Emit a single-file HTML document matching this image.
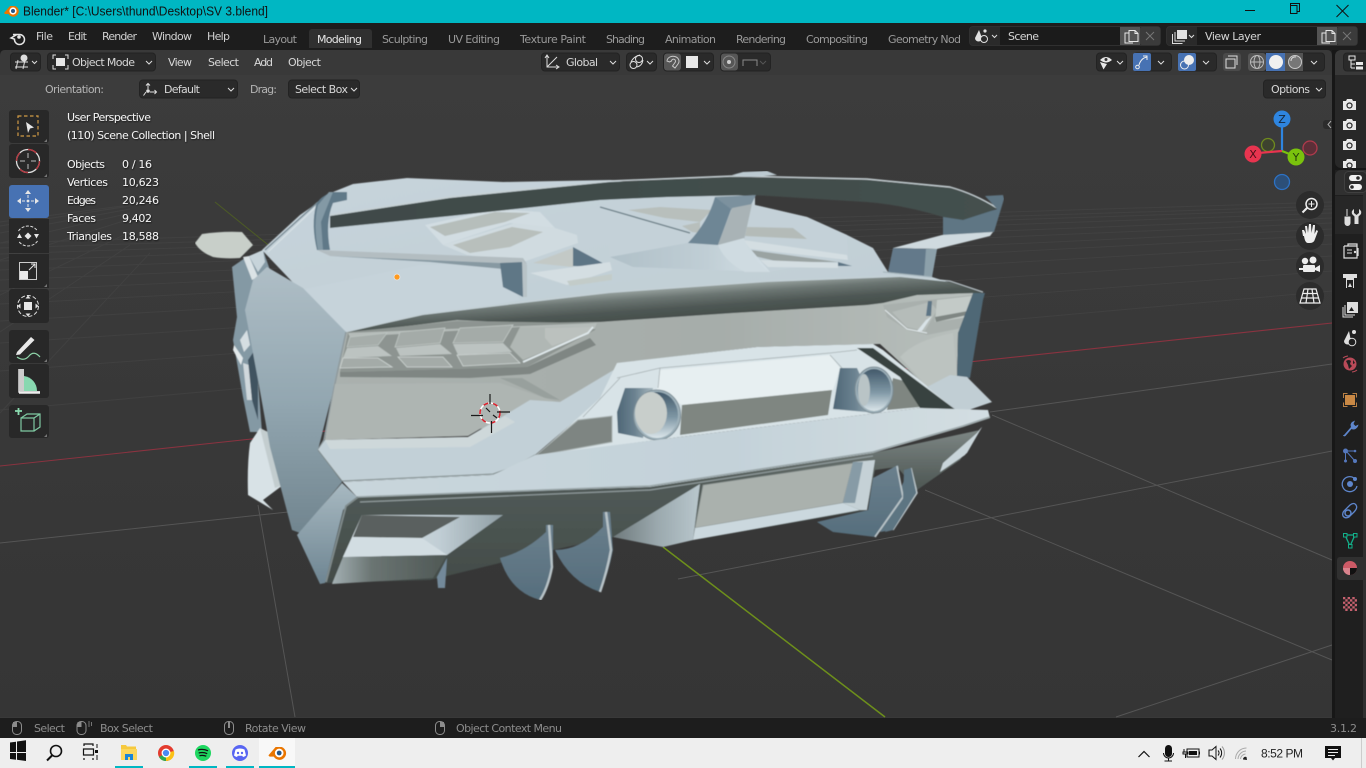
<!DOCTYPE html>
<html><head><meta charset="utf-8"><title>Blender</title>
<style>
html,body{margin:0;padding:0;width:1366px;height:768px;overflow:hidden;background:#393939}
svg{display:block}
text{font-family:"DejaVu Sans","Liberation Sans",sans-serif;font-size:11px;white-space:pre}
.m{fill:#d0d0d0}.tb{fill:#9a9a9a}.w{fill:#d8d8d8}.s{fill:#8c8c8c}
.i{fill:#f2f2f2;filter:url(#ds)}
.b{fill:#2a2a2a;stroke:#232323}
.ic{fill:none;stroke:#dcdcdc;stroke-width:1.2}
</style></head><body>
<svg width="1366" height="768" viewBox="0 0 1366 768" xmlns="http://www.w3.org/2000/svg">
<defs>
<filter id="ds" x="-5%" y="-30%" width="110%" height="160%"><feDropShadow dx="0.6" dy="0.8" stdDeviation="0.7" flood-color="#000" flood-opacity=".8"/></filter>
<filter id="soft" x="0" y="0" width="100%" height="100%"><feGaussianBlur stdDeviation="0.55"/></filter>
<linearGradient id="bg" x1="0" y1="0" x2="0" y2="1"><stop offset="0" stop-color="#3c3c3c"/><stop offset="1" stop-color="#353535"/></linearGradient>
<linearGradient id="deck" x1="0" y1="0" x2="1" y2="1"><stop offset="0" stop-color="#c7d4db"/><stop offset="1" stop-color="#bfcdd4"/></linearGradient>
<linearGradient id="lip" gradientUnits="userSpaceOnUse" x1="600" y1="293" x2="602" y2="322"><stop offset="0" stop-color="#97a19e"/><stop offset=".3" stop-color="#6c7673"/><stop offset=".7" stop-color="#4e5754"/><stop offset="1" stop-color="#464f4c"/></linearGradient>
<linearGradient id="rear" x1="0" y1="0" x2="1" y2="0"><stop offset="0" stop-color="#aab1ae"/><stop offset=".6" stop-color="#a6adaa"/><stop offset="1" stop-color="#b9c0bd"/></linearGradient>
<linearGradient id="side" x1="0" y1="0" x2="0" y2="1"><stop offset="0" stop-color="#afbec6"/><stop offset=".5" stop-color="#93a7b1"/><stop offset="1" stop-color="#71858f"/></linearGradient>
<linearGradient id="corner" x1="0" y1="0" x2="0" y2="1"><stop offset="0" stop-color="#a8b9c1"/><stop offset="1" stop-color="#6e8592"/></linearGradient>
<linearGradient id="und" x1="0" y1="0" x2="0" y2="1"><stop offset="0" stop-color="#7d8684"/><stop offset=".35" stop-color="#515a57"/><stop offset="1" stop-color="#434c49"/></linearGradient>
<linearGradient id="fin" x1="0" y1="0" x2="0" y2="1"><stop offset="0" stop-color="#6b808d"/><stop offset="1" stop-color="#566e7d"/></linearGradient>
<linearGradient id="bar" x1="0" y1="0" x2="1" y2="0"><stop offset="0" stop-color="#4e6676"/><stop offset=".5" stop-color="#6c8391"/><stop offset="1" stop-color="#a9b9c0"/></linearGradient>
<linearGradient id="inn" x1="0" y1="0" x2="0" y2="1"><stop offset="0" stop-color="#42596a"/><stop offset=".55" stop-color="#7f97a5"/><stop offset="1" stop-color="#dbe6ea"/></linearGradient>
<linearGradient id="bump" x1="0" y1="0" x2="1" y2="0"><stop offset="0" stop-color="#c9d6dc"/><stop offset=".6" stop-color="#c4d2d9"/><stop offset="1" stop-color="#d3dee2"/></linearGradient>
<linearGradient id="base" x1="0" y1="0" x2="1" y2="0"><stop offset="0" stop-color="#b0c0c8"/><stop offset=".6" stop-color="#c0ced5"/><stop offset="1" stop-color="#d4e0e6"/></linearGradient>
<linearGradient id="plateL" x1="0" y1="0" x2="1" y2="0"><stop offset="0" stop-color="#6f7a7c"/><stop offset=".5" stop-color="#9aa8ad"/><stop offset="1" stop-color="#b9c7cd"/></linearGradient>
<linearGradient id="wingE" x1="0" y1="0" x2="1" y2="0"><stop offset="0" stop-color="#3f4a48"/><stop offset="1" stop-color="#44504e"/></linearGradient>
<linearGradient id="inlet" x1="0" y1="0" x2="1" y2="0"><stop offset="0" stop-color="#dbe5ea"/><stop offset=".6" stop-color="#c1ced5"/><stop offset="1" stop-color="#8f9ea4"/></linearGradient>
<linearGradient id="lowb" x1="0" y1="0" x2="1" y2="0"><stop offset="0" stop-color="#a4b1b4"/><stop offset=".35" stop-color="#6a7472"/><stop offset="1" stop-color="#4f5855"/></linearGradient>
</defs>

<!-- viewport -->
<rect x="0" y="50" width="1332" height="667" fill="url(#bg)"/>
<g stroke="#474747" stroke-width="1" fill="none" opacity=".55">
<path d="M0 243L1332 202M0 248L1332 206M0 254L1332 209M0 261L1332 213M0 270L1332 218M0 280L1332 223M0 291L1332 229M0 304L1332 235M0 321L1332 244M0 343L1332 256M0 371L1332 271M0 410L1332 291"/>
<path d="M0 222L130 205M0 226L130 206M0 233L130 209M0 243L130 213M0 260L130 219M0 295L130 232M0 332L130 245M0 413L150 253"/>
</g>
<g stroke="#555" stroke-width="1" fill="none">
<path d="M0 543L288 512M990 412L1332 364M678 579L1332 451M1116 717L1332 645"/>
<path d="M258 505L295 717M925 490L1332 660M992 415L1332 560"/>
</g>
<g stroke-width="1.1" fill="none">
<path d="M0 466L1332 323" stroke="#8a3340"/>
<path d="M215 202L272 248" stroke="#4c5a26"/>
<path d="M663 547L885 717" stroke="#6d8f1b" stroke-width="1.5"/>
</g>

<!-- ===== CAR ===== -->
<g filter="url(#soft)">
<!-- fins behind right side -->
<polygon points="940,472 982,427 967,453 945,470" fill="#c9d5da"/>
<polygon points="910,468 917,493 893,530 880,532 895,500" fill="#5d7482"/>
<!-- mirror -->
<path d="M195 243L202 234Q222 231 242 232L253 245L240 258Q225 259 213 257Q200 252 195 243Z" fill="#c8cfc9"/>
<!-- left strip -->
<polygon points="232,267 245,258 263,250 270,270 258,380 262,432 250,432 243,397 233,340 237,317" fill="#8499a4"/>
<polygon points="243,257 249,256 258,277 252,280" fill="#dbe3e6"/>
<polygon points="249,256 263,250 265,262 258,272" fill="#c7d4da"/>
<polygon points="243,363 249,365 252,400 247,400" fill="#d0d8dc"/>
<polygon points="234,345 243,358 241,365 233,350" fill="#e3e9eb"/>
<polygon points="240,340 247,330 250,345 244,352" fill="#d5dee2"/>
<polygon points="248,360 258,345 258,420 252,400" fill="#3f5260"/>
<path d="M250 443L260 428L283 485L263 500L273 510L248 495Q247 465 250 443Z" fill="#d8e2e6"/>
<polygon points="260,428 268,432 283,485 275,488" fill="#c3cdcf"/>
<!-- deck body -->
<polygon points="262,250 300,215 333,192 353,184 407,178 503,182 610,180 755,197 755,205 807,217 847,235 873,248 888,272 932,277 983,293 600,300 346,332 300,290" fill="url(#deck)"/>
<path d="M265 250L317 203L333 193" stroke="#7a8b94" stroke-width="1.5" fill="none"/>
<path d="M268 252L320 203" stroke="#dbe4e8" stroke-width="1" fill="none"/>
<polygon points="300,290 420,265 500,263 520,300 346,332" fill="#c6d3da"/>
<!-- left vents -->
<polygon points="425,225 495,209 540,212 555,228 510,223 443,245" fill="#d2dde2"/>
<polygon points="430,227 495,212 530,213 505,222 445,236" fill="#b6bebb"/>
<polygon points="443,245 515,223 555,228 577,235 578,243 523,262 467,255" fill="#d0dbe0"/>
<polygon points="453,245 512,227 543,232 510,247 470,253" fill="#b8bfbc"/>
<polygon points="533,263 573,248 573,267" fill="#c3c9c6"/>
<polygon points="573,247 610,267 573,266" fill="#5d7585"/>
<polygon points="530,273 610,262 612,270 567,285" fill="#d4dee2"/>
<polygon points="567,281 612,274 612,280 570,286" fill="#c3ccc9"/>
<!-- right vents and deck -->
<polygon points="610,202 700,198 755,205 807,217 847,235 848,258 770,272 633,267 610,257" fill="#c4d1d8"/>
<polygon points="628,210 660,207 712,210 700,222 665,218" fill="#b8bfbc"/>
<path d="M600 207L690 233" stroke="#6b7e86" stroke-width="1.3"/>
<polygon points="682,226 700,222 700,233 692,232" fill="#b8bfbc"/>
<polygon points="747,227 793,228 807,239 745,236" fill="#b4bbb8"/>
<polygon points="743,240 847,255 848,260 743,248" fill="#d4dee2"/>
<polygon points="743,249 838,262 780,262 750,255" fill="#9aa3a2"/>
<polygon points="760,260 838,263 838,268 768,267" fill="#d4dee2"/>
<polygon points="838,262 852,266 838,266" fill="#5d7585"/>
<!-- central pylon -->
<polygon points="687,243 610,257 633,267 770,272 743,240" fill="url(#base)"/>
<path d="M715 197L732 207L718 245L688 243Q708 222 715 197Z" fill="#6e8695"/>
<polygon points="715,197 756,195 750,207 732,210" fill="#7b919e"/>
<polygon points="732,208 752,204 744,240 718,245" fill="#a9b3b6"/>
<path d="M718 245L744 238Q750 258 770 272L745 272Q725 262 718 245Z" fill="#cfdbe1"/>
<!-- wing -->
<path d="M330 216L450 198L610 182L733 177L867 180L950 188Q975 195 997 208Q980 217 963 220Q950 220 943 217Q905 205 867 202L753 195L667 197L600 200L450 216L330 228Z" fill="url(#wingE)"/>
<path d="M330 215L450 197L610 181L733 176L867 179L950 187Q975 194 997 208" stroke="#c7d2d6" stroke-width="1.4" fill="none"/>
<polygon points="732,175 743,172 767,171 777,175 750,177" fill="#bccad1"/>
<!-- wing right end plate -->
<polygon points="985,196 1003,195 1004,199 994,232 943,236 943,217 963,220 997,209" fill="#5e7684"/>
<polygon points="942,235 993,232 990,236 937,249 893,248" fill="#cfdadf"/>
<polygon points="893,248 937,249 932,277 888,272" fill="#64798a"/>
<polygon points="926,249 937,249 932,277 924,276" fill="#8ca0aa"/>
<path d="M932 277L883 272" stroke="#a2b2b9" stroke-width="1"/>
<!-- wing left support -->
<path d="M347 192H333Q320 196 316 205Q311 225 317 250H330Q325 222 333 203L347 200Z" fill="#607988"/>
<path d="M329 192H333L321 222L323 250H318Q313 225 318 205Z" fill="#8399a5"/>
<polygon points="317,250 420,254 523,258 527,264 330,256" fill="#b3bdc1"/>
<polygon points="330,256 500,263 503,269 430,262" fill="#8799a2"/>
<polygon points="500,263 523,262 527,267 527,297 523,297 503,287" fill="#5f7786"/>
<polygon points="522,260 527,265 527,297 523,297" fill="#b8c3c7"/>
<!-- rear grey panel -->
<polygon points="346,332 600,300 983,293 958,333 957,377 927,387 880,344 757,347 620,363 600,420 325,440 333,385" fill="url(#rear)"/>
<path d="M900 357Q915 340 953 333L957 377L927 387Z" fill="#bcc3c0"/>
<!-- ducktail lip -->
<path d="M346 332L423 315L523 303L610 293L767 282L900 277L950 282L983 293L973 293L917 295L883 303L867 305L733 313L600 322L520 323L457 320L350 333Z" fill="url(#lip)"/>
<path d="M346 332L423 314L523 302L610 292L767 281L900 276L950 281L983 292" stroke="#c5d1d6" stroke-width="1" fill="none"/>
<!-- left tail light -->
<polygon points="348,332 457,321 597,323 595,330 527,367 340,372" fill="#8d9491"/>
<polygon points="348,333 597,323 595,329 520,327 350,337" fill="#b5bcb9"/>
<polygon points="350,337 387,333 378,345 347,347" fill="#a6adaa" stroke="#bcc4c1" stroke-width=".8"/>
<polygon points="400,332 445,328 440,343 395,347" fill="#a4aba8" stroke="#c0c7c4" stroke-width=".8"/>
<polygon points="460,328 513,325 503,342 453,343" fill="#a4aba8" stroke="#c0c7c4" stroke-width=".8"/>
<polygon points="347,348 378,346 392,356 343,358" fill="#bcc3c1"/>
<polygon points="396,348 440,344 452,354 400,356" fill="#bcc3c1"/>
<polygon points="453,344 503,343 512,352 458,355" fill="#bcc3c1"/>
<polygon points="343,358 378,358 392,367 340,368" fill="#a4aba8" stroke="#cdd4d2" stroke-width=".8"/>
<polygon points="398,357 443,357 452,367 407,367" fill="#a4aba8" stroke="#cdd4d2" stroke-width=".8"/>
<polygon points="457,355 510,353 520,363 463,366" fill="#a4aba8" stroke="#cdd4d2" stroke-width=".8"/>
<polygon points="520,327 593,327 588,333 523,360 510,347" fill="#b0b7b4"/>
<polygon points="545,328 593,327 588,333 552,346 545,338" fill="#bbc1be"/>
<path d="M593 327L588 333L523 362" stroke="#dfe8eb" stroke-width="1.8" fill="none"/>
<polygon points="340,372 527,367 590,338 596,345 530,374 500,376 470,378 340,377" fill="#7f8683"/>
<polygon points="500,378 522,378 560,400 545,398" fill="#98a09d"/>
<!-- right tail light -->
<polygon points="883,305 972,295 967,327 927,335 907,330 887,317" fill="#a9b0ad"/>
<polygon points="892,312 930,302 937,310 925,331 907,327" fill="#b5bcb9"/>
<polygon points="928,301 932,301 931,316 926,316" fill="#5d7585"/>
<polygon points="926,320 932,316 922,331 917,331" fill="#d9e3e7"/>
<polygon points="937,300 972,296 968,317 935,322" fill="#c3cac7"/>
<polygon points="935,317 968,311 967,315 936,322" fill="#7f8683"/>
<path d="M885 310L907 329L927 333" stroke="#e1e8ea" stroke-width="1" fill="none"/>
<!-- right side dark blue -->
<polygon points="973,293 985,293 983,300 970,378 957,377 958,333" fill="#4f6776"/>
<!-- left side panel -->
<polygon points="267,267 303,288 346,332 333,387 335,383 318,450 342,482 300,533 292,530 270,447 258,380 245,310 253,280" fill="url(#side)"/>
<path d="M346 332L334 388L324 440L318 450" stroke="#8e9a9e" stroke-width="1.5" fill="none"/>
<!-- rear lower left diag -->
<polygon points="335,384 500,383 557,402 530,400 468,436 325,440" fill="#aeb5b2"/>
<polygon points="325,440 468,437 530,400 560,402 617,368 640,365 535,455 513,468 493,475 343,482 318,450" fill="#c2d0d7"/>
<polygon points="325,440 468,437 505,416 515,422 470,447 330,449" fill="#ced8da"/>
<path d="M318 450L342 481L493 474L513 467L535 455" stroke="#7f8a8a" stroke-width="1" fill="none"/>
<!-- exhaust panel -->
<polygon points="600,398 617,363 757,347 873,344 883,350 960,413 920,408 680,437 535,456 570,425" fill="#d8e3e7"/>
<polygon points="660,370 830,355 840,368 833,390 682,405 657,390" fill="#e7eff1"/>
<path d="M617 378L660 368L830 353L857 350M583 417L620 378M660 368L658 388M830 355L842 368" stroke="#a7b1b3" stroke-width=".8" fill="none"/>
<!-- inlet triangle -->
<polygon points="535,456 578,420 612,416 612,442" fill="#7e8582" stroke="#a8b1b0" stroke-width="1"/>
<polygon points="682,405 832,390 828,415 680,435" fill="#7f8681"/>
<polygon points="893,378 908,382 920,407 887,410" fill="#7f8681"/>
<polygon points="857,348 873,348 960,413 920,408 900,377" fill="#39433f"/>
<!-- exhausts -->
<path d="M625 388L653 388L643 438L618 433L617 412Z" fill="url(#bar)"/>
<ellipse cx="657" cy="415" rx="23.5" ry="25" fill="#9db0b9" stroke="#7b8c94"/>
<ellipse cx="657" cy="415" rx="21" ry="23" fill="url(#inn)"/>
<ellipse cx="651" cy="413" rx="16" ry="21" fill="#c8cecb"/>
<path d="M840 368L857 368L877 413L833 409Z" fill="url(#bar)"/>
<ellipse cx="874" cy="390" rx="19" ry="23" fill="#9db0b9" stroke="#7b8c94"/>
<ellipse cx="874" cy="390" rx="17" ry="21" fill="url(#inn)"/>
<ellipse cx="864" cy="390" rx="6" ry="16" fill="#b9c4c6"/>
<!-- right top piece -->
<polygon points="927,387 950,375 967,377 992,402 960,413" fill="#c1ced4"/>
<!-- underside -->
<polygon points="357,497 650,487 873,453 980,430 960,460 917,490 897,467 875,470 867,510 693,540 663,547 613,537 553,550 430,580 325,583 343,510" fill="url(#und)"/>
<!-- right light ring -->
<polygon points="943,463 977,433 982,427 965,455 940,472" fill="#c9d5da"/>
<!-- main bumper -->
<polygon points="343,482 493,475 535,455 680,437 920,408 988,410 990,418 963,427 873,453 650,487 357,497" fill="url(#bump)"/>
<path d="M357 497L650 486L873 452L963 426L990 417" stroke="#9aa6a8" stroke-width="1.6" fill="none"/>
<path d="M360 502L650 490L873 456" stroke="#8f9a9b" stroke-width="1.2" fill="none"/>
<!-- plate section -->
<polygon points="700,484 613,537 663,547 693,540" fill="url(#plateL)"/>
<polygon points="703,485 853,463 843,503 695,528" fill="#aab1ad" stroke="#7f8886" stroke-width=".8"/>
<polygon points="695,528 843,503 860,510 693,540" fill="#cbd8de"/>
<polygon points="853,462 875,460 867,510 860,510 843,503" fill="#c5d1d6"/>
<polygon points="853,462 863,462 855,503 843,503" fill="#879ba6"/>
<!-- right fins -->
<polygon points="898,465 903,497 875,537 833,532 817,522 868,510 873,478" fill="url(#fin)"/>
<path d="M897 466L903 497L875 537" stroke="#b8c3c7" stroke-width="1.8" fill="none"/>
<path d="M911 468L917 493L893 530" stroke="#b8c3c7" stroke-width="1.5" fill="none"/>
<polygon points="904,470 911,468 916,493 893,530 885,532 903,499" fill="#5d7482"/>
<!-- lower left corner -->
<polygon points="297,535 342,483 357,497 343,510 325,583 320,584" fill="url(#corner)"/>
<path d="M358 497L346 506L326 582" stroke="#808b8c" stroke-width="1.8" fill="none"/>
<!-- inlet -->
<polygon points="362,515 503,515 447,555 343,557" fill="url(#inlet)"/>
<polygon points="362,515 460,517 422,538 353,537" fill="#5a615e"/>
<polygon points="353,537 422,538 447,555 343,557" fill="#d2dde2"/>
<polygon points="343,557 447,555 433,578 332,584" fill="url(#lowb)"/>
<!-- left fins -->
<polygon points="437,577 447,558 445,588 438,588" fill="#73899a"/>
<path d="M500 558Q525 552 546 532V525H553V567Q548 590 540 600Q510 592 500 558Z" fill="url(#fin)"/>
<path d="M549 525L552 567Q548 588 540 600" stroke="#b8c3c7" stroke-width="2.4" fill="none"/>
<path d="M555 550Q580 550 603 527V512H610L613 550Q608 575 600 592Q570 582 555 550Z" fill="url(#fin)"/>
<path d="M606 512L611 550Q607 572 600 592" stroke="#b8c3c7" stroke-width="2.4" fill="none"/>
</g>
<!-- origin dot & cursor -->
<circle cx="397" cy="277" r="3" fill="#ff9a1f" stroke="#e6e6e6" stroke-width=".8"/>
<circle cx="490" cy="413" r="10" fill="none" stroke="#fff" stroke-width="1.5"/>
<circle cx="490" cy="413" r="10" fill="none" stroke="#d9232e" stroke-width="1.6" stroke-dasharray="5 5"/>
<path d="M471 415.5H483M497 412H510M490 394V404M491.5 421V433M486 408L490 412M493 415L497 418" stroke="#1a1a1a" stroke-width="1.2" fill="none"/>

<!-- ===== Title bar ===== -->
<rect width="1366" height="23" fill="#00b7c3"/>
<g transform="translate(12 11)"><path d="M-8 2L-2-5H3A5.5 5.5 0 1 1-3.5 3L-7 3Z" fill="#ea7600"/><circle cx="1" cy="0" r="3.6" fill="#fff"/><circle cx="1" cy="0" r="2" fill="#265787"/></g>
<text x="23" y="15.5" textLength="245" lengthAdjust="spacingAndGlyphs" style="font-family:'Liberation Sans',sans-serif;font-size:12.5px" fill="#111">Blender* [C:\Users\thund\Desktop\SV 3.blend]</text>
<path d="M1245 10.5H1255" stroke="#111" stroke-width="1"/>
<path d="M1290.5 5.5V3.5H1299.5V11.5H1297M1290.5 5.5H1297V13.5H1290.5Z" fill="none" stroke="#111"/>
<path d="M1336.5 5.5L1348.5 17.5M1348.5 5.5L1336.5 17.5" stroke="#111" transform="translate(0 -0.5)"/>

<!-- ===== Top bar ===== -->
<rect y="23" width="1366" height="27" fill="#1d1d1d"/>
<g transform="translate(18 36)" fill="none" stroke="#e6e6e6"><path d="M-7 2L-2-1L-5-1.5H1.5A5 5 0 1 1-3.5 3.2Z" stroke-width="1.5"/><circle cx="1" cy="1" r="1.8" fill="#e6e6e6" stroke="none"/></g>
<text class="m" x="36" y="40" textLength="17">File</text>
<text class="m" x="68" y="40" textLength="19">Edit</text>
<text class="m" x="102" y="40" textLength="35">Render</text>
<text class="m" x="152" y="40" textLength="40">Window</text>
<text class="m" x="207" y="40" textLength="23">Help</text>
<path d="M309 48V32a3 3 0 0 1 3-3h57a3 3 0 0 1 3 3V48Z" fill="#303030"/>
<text class="tb" x="263" y="43" textLength="34">Layout</text>
<text x="317" y="43" textLength="45" fill="#e6e6e6">Modeling</text>
<text class="tb" x="382" y="43" textLength="46">Sculpting</text>
<text class="tb" x="448" y="43" textLength="52">UV Editing</text>
<text class="tb" x="520" y="43" textLength="66">Texture Paint</text>
<text class="tb" x="606" y="43" textLength="39">Shading</text>
<text class="tb" x="665" y="43" textLength="51">Animation</text>
<text class="tb" x="736" y="43" textLength="50">Rendering</text>
<text class="tb" x="806" y="43" textLength="62">Compositing</text>
<text class="tb" x="888" y="43" textLength="73">Geometry Nod</text>
<!-- scene -->
<rect x="969.5" y="26.5" width="191" height="19" rx="3.5" fill="#2a2a2a" stroke="#303030"/>
<rect x="1000" y="27" width="120" height="18" fill="#1b1b1b"/>
<rect x="1120" y="27" width="20" height="18" fill="#545454"/>
<rect x="1140" y="27" width="20" height="18" rx="2" fill="#3b3b3b"/>
<g fill="#e0e0e0"><path d="M975 38L979 30L982 38a3.500 3.500 0 0 1-7 0Z"/><circle cx="985" cy="31" r="1.600"/></g><circle cx="984" cy="39" r="3.500" fill="#2a2a2a" stroke="#e0e0e0"/>
<path d="M992 35l2.500 2.500 2.500-2.500" stroke="#ddd" fill="none"/>
<text x="1008" y="40" textLength="31" fill="#d6d6d6">Scene</text>
<path d="M1129 30.500h6l3 3v8h-9zM1135 30.500v3h3M1129 33H1125V43h8" fill="none" stroke="#e6e6e6"/>
<path d="M1146 32l8 8M1154 32l-8 8" stroke="#777"/>
<rect x="1166.5" y="26.5" width="191" height="19" rx="3.5" fill="#2a2a2a" stroke="#303030"/>
<rect x="1197" y="27" width="120" height="18" fill="#1b1b1b"/>
<rect x="1317" y="27" width="20" height="18" fill="#545454"/>
<rect x="1337" y="27" width="20" height="18" rx="2" fill="#3b3b3b"/>
<rect x="1177" y="30" width="10" height="9" fill="#e0e0e0"/><path d="M1175 32v9h10M1172.500 34v9.500h10" stroke="#ddd" fill="none"/>
<path d="M1189 35l2.500 2.500 2.500-2.500" stroke="#ddd" fill="none"/>
<text x="1205" y="40" textLength="56" fill="#d6d6d6">View Layer</text>
<path d="M1326 30.500h6l3 3v8h-9zM1332 30.500v3h3M1326 33H1322V43h8" fill="none" stroke="#e6e6e6"/>
<path d="M1343 32l8 8M1351 32l-8 8" stroke="#777"/>

<!-- ===== Viewport header region ===== -->
<path d="M0 50H1326a6 6 0 0 1 6 6V75H0Z" fill="#393939"/>
<path d="M0 50H5Q0 50 0 56Z" fill="#1d1d1d"/>
<path d="M1332 50H1327Q1332 50 1332 56Z" fill="#1d1d1d"/>
<!-- header widgets row 1 -->
<rect class="b" x="10.500" y="53" width="30" height="18" rx="3.500"/>
<path d="M15 62H28M15 67H28M18 60L16 69M25 60L23 69" stroke="#ddd" fill="none"/><circle cx="24" cy="58" r="3.500" fill="#ddd"/>
<path d="M32 61l2.500 2.500 2.500-2.500" stroke="#ddd" fill="none"/>
<rect class="b" x="47.500" y="53" width="108" height="18" rx="3.500"/>
<rect x="56" y="58" width="9" height="8" fill="#e8e8e8"/><path d="M53 59v-4h3M65 55h3v4M68 65v4h-3M56 69h-3v-4" stroke="#ddd" fill="none"/>
<text x="72" y="66" textLength="63" fill="#d8d8d8">Object Mode</text>
<path d="M146 61l3 3 3-3" stroke="#ddd" fill="none"/>
<text class="w" x="168" y="66" textLength="24">View</text>
<text class="w" x="208" y="66" textLength="31">Select</text>
<text class="w" x="254" y="66" textLength="19">Add</text>
<text class="w" x="288" y="66" textLength="33">Object</text>
<rect class="b" x="541.500" y="53" width="78" height="18" rx="3.500"/>
<path d="M547 56V67H558M547 67L557 57M545 58l2-3 2 3M556 65l3 2-3 2" stroke="#ddd" fill="none"/>
<text x="566" y="66" textLength="32" fill="#d8d8d8">Global</text>
<path d="M610 61l3 3 3-3" stroke="#ddd" fill="none"/>
<rect class="b" x="626.500" y="53" width="30" height="18" rx="3.500"/>
<circle cx="633.500" cy="65" r="3.500" fill="none" stroke="#e0e0e0"/><circle cx="639" cy="59" r="3.500" fill="none" stroke="#e0e0e0"/><path d="M631 62Q634 56 640 55M643 60Q642 66 637 67" stroke="#e0e0e0" fill="none"/>
<path d="M647 61l3 3 3-3" stroke="#ddd" fill="none"/>
<rect class="b" x="663.500" y="53" width="50" height="18" rx="3.500"/>
<rect x="664" y="53.500" width="17" height="17" rx="3" fill="#565656"/>
<path d="M667 61a6 5 0 1 1 11 3l-3 4-2.500-2 2.500-3.500a2 2 0 1 0-3.500-1.500l-2 1Z" fill="none" stroke="#c8c8c8"/>
<rect x="686" y="56" width="12" height="12" fill="#e8e8e8"/>
<path d="M704 61l3 3 3-3" stroke="#ddd" fill="none"/>
<rect class="b" x="720.500" y="53" width="50" height="18" rx="3.500"/>
<rect x="721" y="53.500" width="17" height="17" rx="3" fill="#565656"/>
<circle cx="729" cy="62" r="6" fill="none" stroke="#888"/><circle cx="729" cy="62" r="2" fill="#ccc"/>
<path d="M743 66V60H757V66" stroke="#8a8a8a" fill="none"/><path d="M760 61l3 3 3-3" stroke="#555" fill="none"/>
<!-- right side -->
<rect class="b" x="1096.500" y="53" width="30" height="18" rx="3.500"/>
<path d="M1100 60Q1106 54 1112 60Q1106 65 1100 60Z" fill="#e8e8e8"/><circle cx="1106" cy="59.500" r="1.500" fill="#333"/><path d="M1100 62l7 2-3.500 5.500z" fill="#e8e8e8"/>
<path d="M1117 61l3 3 3-3" stroke="#ddd" fill="none"/>
<rect class="b" x="1133.500" y="53" width="38" height="18" rx="3.500"/>
<rect x="1133" y="53" width="18" height="18" rx="2" fill="#4772b3"/>
<circle cx="1137.500" cy="67" r="1.800" fill="none" stroke="#eee"/><path d="M1139 65Q1141 58 1147 57M1143 56h4v4" stroke="#eee" fill="none"/>
<path d="M1158 61l3 3 3-3" stroke="#ddd" fill="none"/>
<rect class="b" x="1178.500" y="53" width="38" height="18" rx="3.500"/>
<rect x="1178" y="53" width="18" height="18" rx="2" fill="#4772b3"/>
<circle cx="1189" cy="60" r="5" fill="#eee"/><circle cx="1184.500" cy="65" r="4" fill="none" stroke="#eee"/>
<path d="M1203 61l3 3 3-3" stroke="#ddd" fill="none"/>
<rect x="1223" y="53" width="18" height="18" rx="3" fill="#4a4a4a"/>
<path d="M1228 56h9v9M1226 59h9v9h-9z" fill="none" stroke="#ddd"/>
<rect class="b" x="1248.500" y="53" width="76" height="18" rx="3.500"/>
<rect x="1248" y="53" width="18" height="18" rx="3" fill="#545454"/>
<rect x="1266" y="53" width="19" height="18" fill="#4772b3"/>
<rect x="1285" y="53" width="18" height="18" fill="#545454"/>
<circle cx="1257" cy="62" r="6.500" fill="none" stroke="#bbb"/><ellipse cx="1257" cy="62" rx="3" ry="6.500" fill="none" stroke="#bbb"/><path d="M1250.500 62H1263.500" stroke="#bbb"/>
<circle cx="1276" cy="62" r="7" fill="#f0f0f0"/>
<circle cx="1295" cy="62" r="6.500" fill="#777" stroke="#c8c8c8"/><path d="M1291 61a4 4 0 0 1 5-4" stroke="#ddd" fill="none"/>
<path d="M1311 61l3 3 3-3" stroke="#ddd" fill="none"/>
<!-- row 2 -->
<text x="45" y="93" textLength="59" fill="#b4b4b4">Orientation:</text>
<rect class="b" x="139.500" y="80" width="98" height="18" rx="3.500"/>
<path d="M148 84V89M146 85.500l2-2 2 2M150 92H156M154.500 90l2 2-2 2M146 92l-2.500 3.500" stroke="#ddd" fill="none"/><circle cx="148" cy="91" r="1.800" fill="#ddd"/>
<text x="164" y="93" textLength="36" fill="#d8d8d8">Default</text>
<path d="M228 88l3 3 3-3" stroke="#ddd" fill="none"/>
<text x="250" y="93" textLength="27" fill="#b4b4b4">Drag:</text>
<rect class="b" x="288.500" y="80" width="71" height="18" rx="3.500"/>
<text x="295" y="93" textLength="53" fill="#d8d8d8">Select Box</text>
<path d="M351 88l3 3 3-3" stroke="#ddd" fill="none"/>
<rect class="b" x="1263.500" y="80" width="62" height="18" rx="3.500"/>
<text x="1271" y="93" textLength="39" fill="#d8d8d8">Options</text>
<path d="M1316 88l3 3 3-3" stroke="#ddd" fill="none"/>

<!-- ===== Toolbar ===== -->
<g fill="#282828">
<rect x="9" y="110" width="40" height="33" rx="3"/><rect x="9" y="144" width="40" height="34" rx="3"/>
<rect x="9" y="219" width="40" height="34"/><rect x="9" y="254" width="40" height="34"/><rect x="9" y="289" width="40" height="34" rx="3"/>
<rect x="9" y="330" width="40" height="33" rx="3"/><rect x="9" y="364" width="40" height="34" rx="3"/>
<rect x="9" y="405" width="40" height="33" rx="3"/>
</g>
<rect x="9" y="185" width="40" height="33" rx="3" fill="#4772b3"/>
<rect x="18" y="116" width="20" height="20" fill="none" stroke="#d09a45" stroke-width="1.2" stroke-dasharray="3.500 2.500"/>
<path d="M26 122L34 127.500L30 128.500L28 133Z" fill="#e6e6e6"/>
<circle cx="28" cy="161" r="11.500" fill="none" stroke="#ddd" stroke-width="1.300"/>
<circle cx="28" cy="161" r="11.500" fill="none" stroke="#b53a42" stroke-width="1.400" stroke-dasharray="9 9"/>
<path d="M28 153V158M28 164V169M20 161H25M31 161H36" stroke="#bbb" fill="none"/>
<g fill="#e6e6e6"><path d="M28 190l3 4h-6zM28 212l3-4h-6zM17 201l4-3v6zM39 201l-4-3v6z"/><circle cx="28" cy="201" r="1.400"/></g><path d="M28 195V198M28 204V207M22 201H25M31 201H34" stroke="#e6e6e6"/>
<path d="M28 232.500l3.500 3.500-3.500 3.500-3.500-3.500z" fill="#e6e6e6"/>
<path d="M18.500 231a11 10 0 0 1 19 0M37.500 241a11 10 0 0 1-19 0" fill="none" stroke="#ddd" stroke-dasharray="3 1.500"/>
<path d="M17 238l2.500-4.500 2.500 4.500zM39 234l-2.500 4.500-2.500-4.500z" fill="#e6e6e6"/>
<rect x="19" y="271" width="9" height="9" fill="#e8e8e8"/><rect x="19.500" y="262.500" width="17" height="17" fill="none" stroke="#ccc"/><path d="M29 270L35 264M31 264h4v4" stroke="#e6e6e6" fill="none"/>
<circle cx="28" cy="306" r="10.500" fill="none" stroke="#ddd" stroke-dasharray="4 2"/>
<rect x="24" y="302" width="8" height="8" fill="#e8e8e8"/><path d="M28 295.500l2.500 3h-5zM28 316.500l2.500-3h-5zM17.500 306l3-2.500v5zM38.500 306l-3-2.500v5z" fill="#e6e6e6"/>
<path d="M17 352L31 337l3.500 3L20 354.500l-4 .5Z" fill="#e8e8e8"/>
<path d="M17 357Q24 362 29 356T40 357" stroke="#8ed3a8" fill="none" stroke-width="1.200"/>
<path d="M19 369V392H40" stroke="#ddd" stroke-width="1.500" fill="none"/><rect x="19" y="369" width="5" height="22" fill="#ccc"/>
<path d="M24 376A15 15 0 0 1 37 391H24Z" fill="#88d8b0"/><path d="M19 392.500H40" stroke="#eee" stroke-width="2.500"/>
<path d="M15 411H22M18.500 408V415" stroke="#8bdbb0" stroke-width="1.800"/>
<path d="M21 418h13v13H21zM21 418l6-4h13v13l-6 4M34 418l6-4" fill="none" stroke="#7fc9a2" stroke-width="1.200"/>
<g fill="#777"><path d="M47 139v3h-3zM47 174v3h-3zM47 284v3h-3zM47 359v3h-3zM47 434v3h-3z"/></g>

<!-- Info text -->
<text class="i" x="67" y="121" textLength="84">User Perspective</text>
<text class="i" x="67" y="139" textLength="148">(110) Scene Collection | Shell</text>
<text class="i" x="67" y="168" textLength="38">Objects</text><text class="i" x="122" y="168" textLength="30">0 / 16</text>
<text class="i" x="67" y="186" textLength="41">Vertices</text><text class="i" x="122" y="186" textLength="37">10,623</text>
<text class="i" x="67" y="204" textLength="29">Edges</text><text class="i" x="122" y="204" textLength="37">20,246</text>
<text class="i" x="67" y="222" textLength="29">Faces</text><text class="i" x="122" y="222" textLength="30">9,402</text>
<text class="i" x="67" y="240" textLength="45">Triangles</text><text class="i" x="122" y="240" textLength="37">18,588</text>

<!-- Nav gizmo -->
<circle cx="1268" cy="145" r="6.500" fill="#3f4a22" fill-opacity=".5" stroke="#6f8a1e" stroke-width="1.300"/>
<circle cx="1310" cy="148" r="7" fill="#5c2f38" stroke="#b03a4c" stroke-width="1.300"/>
<circle cx="1282" cy="182" r="7.500" fill="#2c4f78" stroke="#2d72c4" stroke-width="1.300"/>
<path d="M1282 151V125" stroke="#2e85e0" stroke-width="2.200"/>
<path d="M1282 151L1258 153" stroke="#e8344f" stroke-width="2.200"/>
<path d="M1282 151L1292 155" stroke="#7ac20d" stroke-width="2.200"/>
<circle cx="1282" cy="119" r="8.500" fill="#2e85e0"/>
<circle cx="1253" cy="154" r="8.500" fill="#e8344f"/>
<circle cx="1296" cy="157" r="8.500" fill="#7ac20d"/>
<g style="font-size:10.500px" fill="#14263a" text-anchor="middle">
<text x="1282" y="123">Z</text><text x="1253" y="158" fill="#4a0f18">X</text><text x="1296" y="161" fill="#24400a">Y</text></g>
<path d="M1332 120H1326a3 3 0 0 0-3 3v3a3 3 0 0 0 3 3h6Z" fill="#2c2c2c"/>
<path d="M1331 121l-3 3.500 3 3.500" stroke="#aaa" fill="none"/>
<!-- nav buttons -->
<g fill="#2c2c2c"><circle cx="1310" cy="205" r="14"/><circle cx="1310" cy="236" r="14"/><circle cx="1310" cy="266" r="14"/><circle cx="1310" cy="296" r="14"/></g>
<circle cx="1311.500" cy="204" r="5.500" fill="none" stroke="#eee" stroke-width="1.500"/><path d="M1311.500 201V207M1308.500 204H1314.500" stroke="#eee"/><path d="M1307 208L1302.500 212.500" stroke="#eee" stroke-width="2"/>
<path d="M1303 236l-1-6 2 0 2 4-1-8h2l1 7 1-9h2l.5 9 1.500-8h2l-.5 9 2-4 1.500 1-3 8q-1 4-5 4h-2q-3 0-4-7Z" fill="#eee"/>
<circle cx="1305" cy="261" r="3.200" fill="#eee"/><circle cx="1313" cy="260" r="3.500" fill="#eee"/><rect x="1303" y="265" width="12" height="7" rx="1" fill="#eee"/><path d="M1315 268l5-3v7l-5-2zM1303 268h-4v2h4z" fill="#eee"/>
<path d="M1304 289h12l4 14h-20zM1308 289l-2 14M1312 289l2 14M1302.500 293.500H1317.500M1301 298H1319" fill="none" stroke="#eee" stroke-width="1.200"/>

<!-- ===== Right column ===== -->
<rect x="1332" y="50" width="34" height="668" fill="#171717"/>
<path d="M1335 168V56a6 6 0 0 1 6-6H1366V168H1341a6 6 0 0 1-6-6Z" fill="#282828"/>
<path d="M1335 75V56a6 6 0 0 1 6-6H1366V75Z" fill="#393939"/>
<rect x="1343.500" y="53" width="25" height="18" rx="3.500" fill="#2a2a2a" stroke="#232323"/>
<path d="M1349 56H1355V60H1349ZM1351 60V68M1351 64H1355M1351 68H1355" fill="none" stroke="#e8e8e8"/><rect x="1356" y="62" width="7" height="3" fill="#e8e8e8"/><rect x="1356" y="66.500" width="7" height="3" fill="#e8e8e8"/>
<g fill="#e8e8e8"><path d="M1343 101h3l1-2h5l1 2h3v9h-13z"/><path d="M1343 121h3l1-2h5l1 2h3v9h-13z"/><path d="M1343 141h3l1-2h5l1 2h3v9h-13z"/><path d="M1343 161h3l1-2h5l1 2h3v7h-13z"/></g>
<g fill="none" stroke="#282828" stroke-width="1.200"><circle cx="1349.500" cy="105.500" r="2.500"/><circle cx="1349.500" cy="125.500" r="2.500"/><circle cx="1349.500" cy="145.500" r="2.500"/><circle cx="1349.500" cy="165.500" r="2.500"/></g>
<rect x="1335" y="170" width="31" height="548" fill="#1f1f1f"/>
<rect x="1363" y="195" width="3" height="523" fill="#303030"/>
<path d="M1366 170H1341a6 6 0 0 0-6 6V195H1366Z" fill="#303030"/>
<rect x="1344.500" y="171.500" width="22" height="21" rx="4" fill="#2a2a2a" stroke="#404040"/>
<rect x="1349" y="175" width="13" height="6" rx="3" fill="#f0f0f0"/><circle cx="1358" cy="178" r="1.800" fill="#2a2a2a"/>
<rect x="1349" y="184" width="13" height="6" rx="3" fill="#f0f0f0"/><circle cx="1352" cy="187" r="1.800" fill="#2a2a2a"/>
<rect x="1335" y="196" width="28" height="38" fill="#272727"/>
<!-- prop icons -->
<path d="M1347 209V216M1345 217h5v6a2 2 0 0 1-5 0z" fill="#ddd" stroke="#ddd"/>
<path d="M1354 209v4l2.500 2 2.500-2v-4q3 2 2 5l-2.500 2.500V224h-4v-7.500L1352 214q-1-3 2-5Z" fill="#ddd"/>
<path d="M1344 246h13v-2h-9v2M1344 246v12h13v-12M1358 248v8" fill="none" stroke="#dedede" stroke-width="1.200"/><path d="M1347 250h5M1347 253h5" stroke="#dedede"/><circle cx="1355" cy="252" r="1.200" fill="#ddd"/>
<path d="M1343 278h14v-4h-14zM1346 278v10h8v-10" fill="#dedede"/><rect x="1347" y="280" width="6" height="8" fill="#1f1f1f"/><path d="M1348 287l2-4 2 4z" fill="#ddd"/>
<rect x="1347" y="302" width="11" height="11" fill="#dedede"/><path d="M1345 305v10h10M1343 307v10h10" stroke="#dedede" fill="none"/><path d="M1349 311l2.500-4 2.500 4z" fill="#1f1f1f"/>
<path d="M1344 341L1349 331L1351 341a3.500 3.500 0 0 1-7 0Z" fill="#dedede"/><circle cx="1354" cy="332" r="2" fill="#dedede"/><circle cx="1352" cy="342" r="3.800" fill="#1f1f1f" stroke="#dedede"/>
<circle cx="1350" cy="364" r="6.500" fill="#b84a58"/><path d="M1346 361q3-2 5 0l-1 3 2 2-3 3-1-4zM1353 360l2 3-2 1z" fill="#1f1f1f"/><path d="M1343 358a9 9 0 0 1 5-2M1357 370a9 9 0 0 1-5 2" stroke="#b84a58" fill="none"/>
<rect x="1345" y="395" width="10" height="10" fill="#c98844"/>
<path d="M1343.500 398v-4.500h4M1352.500 393.500h4v4M1356.500 402.500v4h-4M1347.500 406.500h-4v-4" stroke="#b87f44" fill="none"/>
<path d="M1344 435L1351 427a4.500 4.500 0 0 1 1-5l3-1.500-1.500 3.500 2 2 3-1.500q-.5 3-3 4.500-2 1-4 0l-6 7q-2 1-2.500-1Z" fill="#5e86cc"/>
<circle cx="1345.500" cy="451" r="2.500" fill="#5578bd"/><circle cx="1345.500" cy="461" r="1.500" fill="#5578bd"/><circle cx="1355" cy="461" r="2" fill="#5578bd"/><circle cx="1355" cy="451" r="1.300" fill="#5578bd"/><path d="M1346 451H1355M1346 451L1355 461M1345.500 451V461" stroke="#5578bd"/>
<circle cx="1350" cy="484" r="3" fill="#5e86cc"/><path d="M1354 478a7.500 7.500 0 1 0 3 8" fill="none" stroke="#5e86cc" stroke-width="1.300"/><circle cx="1355" cy="479" r="2" fill="#5e86cc"/>
<path d="M1343 516q-1-3 1-5l6-6q4-3 6 0t-2 7l-5 5q-4 2-6-1Z" fill="none" stroke="#5e86cc" stroke-width="1.300"/><circle cx="1348" cy="513" r="3" fill="none" stroke="#5e86cc" stroke-width="1.500"/>
<path d="M1345 535H1355L1350 546Z" fill="none" stroke="#12b08a" stroke-width="1.300"/><g fill="#1f1f1f" stroke="#12b08a"><rect x="1343.500" y="533.500" width="3.500" height="3.500"/><rect x="1353.500" y="533.500" width="3.500" height="3.500"/><rect x="1348.500" y="544.500" width="3.500" height="3.500"/></g>
<path d="M1337 560a3 3 0 0 1 3-3H1363V580H1340a3 3 0 0 1-3-3Z" fill="#303030"/>
<circle cx="1350" cy="568" r="7" fill="#cd5a66"/><path d="M1350 568L1357 568A7 7 0 0 1 1350 575Z" fill="#111"/><path d="M1343 568H1350V575A7 7 0 0 1 1343 568Z" fill="#d9838d"/>
<rect x="1343" y="597" width="14" height="14" fill="#c5606e"/>
<path d="M1345.300 597h2.300v2.300h-2.300zM1350 597h2.300v2.300H1350zM1354.700 597h2.300v2.300h-2.300zM1343 599.300h2.300v2.300H1343zM1347.600 599.300h2.400v2.300h-2.400zM1352.300 599.300h2.400v2.300h-2.400zM1345.300 601.600h2.300v2.300h-2.300zM1350 601.600h2.300v2.300H1350zM1354.700 601.600h2.300v2.300h-2.300zM1343 603.900h2.300v2.300H1343zM1347.600 603.900h2.400v2.300h-2.400zM1352.300 603.900h2.400v2.300h-2.400zM1345.300 606.200h2.300v2.300h-2.300zM1350 606.200h2.300v2.300H1350zM1354.700 606.200h2.300v2.300h-2.300zM1343 608.500h2.300v2.500H1343zM1347.600 608.500h2.400v2.500h-2.400zM1352.300 608.500h2.400v2.500h-2.400z" fill="#222"/>

<!-- ===== Status bar ===== -->
<rect y="718" width="1366" height="20" fill="#1d1d1d"/>
<g fill="none" stroke="#8c8c8c" stroke-width="1"><rect x="12.500" y="721.500" width="9" height="13" rx="4"/><rect x="77" y="721.500" width="9" height="13" rx="4"/><path d="M89 721v6M91.500 722v4" stroke-width=".8"/><rect x="224.500" y="721.500" width="9" height="13" rx="4"/><rect x="435.500" y="721.500" width="9" height="13" rx="4"/></g>
<rect x="13" y="722" width="4" height="5" fill="#8c8c8c"/><rect x="77.500" y="722" width="4" height="5" fill="#8c8c8c"/><rect x="228" y="722" width="2" height="6" fill="#8c8c8c"/><rect x="440" y="722" width="4" height="5" fill="#8c8c8c"/>
<text class="s" x="34" y="732" textLength="31">Select</text>
<text class="s" x="100" y="732" textLength="53">Box Select</text>
<text class="s" x="245" y="732" textLength="61">Rotate View</text>
<text class="s" x="456" y="732" textLength="106">Object Context Menu</text>
<text class="s" x="1330" y="732" textLength="27">3.1.2</text>

<!-- ===== Taskbar ===== -->
<rect y="738" width="1366" height="30" fill="#eeeeee"/>
<rect x="259" y="738" width="36" height="30" fill="#f8f8f8"/>
<path d="M10 742.500l6-.8V752h-6zM17 741.500l9-1.300V752h-9zM10 753h6v6.800l-6-.8zM17 753h9v8l-9-1.300z" fill="#111"/>
<circle cx="56" cy="751" r="5.500" fill="none" stroke="#111" stroke-width="1.600"/><path d="M52 755.500L47 760.500" stroke="#111" stroke-width="2"/>
<path d="M84 746V744H93V746M84 760V758M93 760V758M83.500 749h10v6h-10z" fill="none" stroke="#111" stroke-width="1.200"/><rect x="95" y="750" width="3" height="3" fill="#111"/><path d="M97 744v4M97 755v5" stroke="#111"/>
<path d="M121 745h5l1 1.500h9V760h-15z" fill="#f6c93e"/><path d="M121 749h16v11h-16z" fill="#fbd75b"/><rect x="125" y="754" width="8" height="6" fill="#1a86d8"/><rect x="128" y="757" width="2" height="3" fill="#fbd75b"/>
<circle cx="166" cy="753" r="8" fill="#e33b2e"/><path d="M166 753L159 757A8 8 0 0 0 166.500 761Z" fill="#2da94f"/><path d="M166 753L174 751A8 8 0 0 1 166 761Z" fill="#fbc116"/><circle cx="166" cy="753" r="3.800" fill="#4a8af4" stroke="#fff" stroke-width="1.300"/>
<circle cx="203" cy="753" r="8" fill="#1ed760"/><path d="M198 750q5-1.500 10 .8M198.700 753q4.500-1.200 8.500.7M199.500 755.700q3.500-.9 6.800.5" stroke="#111" stroke-width="1.300" fill="none"/>
<circle cx="240" cy="753" r="8" fill="#5865f2"/><path d="M235.500 749.500q4.500-2 9 0l1.500 6q-1.500 1.200-3 1.500l-.8-1.200h-4.400l-.8 1.200q-1.500-.3-3-1.500z" fill="#fff"/><circle cx="238" cy="753" r="1.200" fill="#5865f2"/><circle cx="242" cy="753" r="1.200" fill="#5865f2"/>
<g transform="translate(278 753) scale(1.200)"><path d="M-8 2L-2-5H3A5.500 5.500 0 1 1-3.500 3L-7 3Z" fill="#ea7600"/><circle cx="1" cy="0" r="3.600" fill="#fff"/><circle cx="1" cy="0" r="2" fill="#265787"/></g>
<g fill="#00b7c3"><rect x="115" y="766" width="28" height="2"/><rect x="189" y="766" width="28" height="2"/><rect x="226" y="766" width="28" height="2"/><rect x="259" y="766" width="36" height="2"/></g>
<path d="M1138.500 757L1144 751.500L1149.500 757" fill="none" stroke="#111" stroke-width="1.200"/>
<rect x="1165" y="745" width="7" height="12" rx="3.500" fill="#111"/><path d="M1163.500 753a4.700 4.700 0 0 0 10 0M1168.500 758v3M1164.500 761H1172" fill="none" stroke="#111"/>
<rect x="1187" y="749" width="12" height="8" fill="none" stroke="#111"/><rect x="1189" y="751" width="8" height="4" fill="#111"/><path d="M1199.500 751.500v3M1184 749v3M1187 749v3M1183 752h5v2h-5zM1185.500 754v4" stroke="#111" fill="none"/>
<path d="M1209 750h3l4-3.500v13L1212 756h-3zM1218 750.500a3.500 3.500 0 0 1 0 5M1220 748.500a7 7 0 0 1 0 9" fill="none" stroke="#111"/><path d="M1222 746.500a10 10 0 0 1 0 13" stroke="#999" fill="none"/>
<path d="M1235.500 759a11 11 0 0 1 11-11M1238 759a8.500 8.500 0 0 1 8-8M1240.500 759a5.500 5.500 0 0 1 5-5" fill="none" stroke="#aaa"/><path d="M1243 759.500a2.500 2.500 0 0 1 3.500-2.500l.5 3z" fill="#222"/>
<text x="1261" y="757.500" textLength="42" style="font-family:'Liberation Sans',sans-serif;font-size:12px" fill="#222">8:52 PM</text>
<path d="M1325 746H1341V758H1335L1333 760.500L1331 758H1325Z" fill="#111"/><path d="M1328 749.500H1338M1328 752.500H1338M1328 755.500H1335" stroke="#eee"/>
<path d="M1361.500 738V768" stroke="#ccc"/>
</svg>
</body></html>
